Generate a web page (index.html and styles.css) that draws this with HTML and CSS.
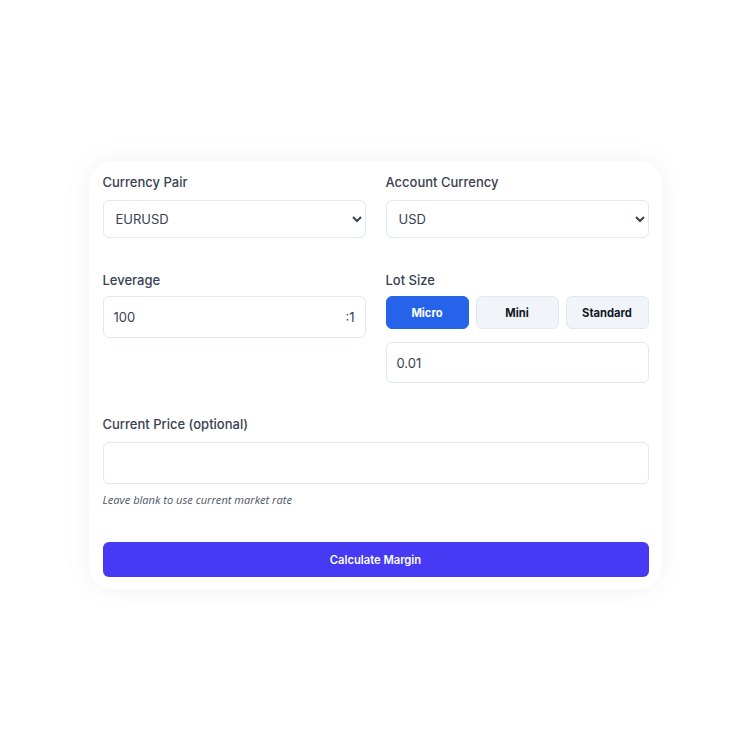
FILE: index.html
```html
<!DOCTYPE html>
<html lang="en">
<head>
<meta charset="utf-8">
<title>Margin Calculator</title>
<link rel="stylesheet" href="styles.css">
</head>
<body>
<div class="card">
  <div class="grid">
    <div class="group">
      <label class="label">Currency Pair</label>
      <select class="field select">
        <option>EURUSD</option>
      </select>
    </div>
    <div class="group">
      <label class="label">Account Currency</label>
      <select class="field select">
        <option>USD</option>
      </select>
    </div>
    <div class="group">
      <label class="label">Leverage</label>
      <div class="field input-wrap">
        <span class="value">100</span>
        <span class="suffix">:1</span>
      </div>
    </div>
    <div class="group">
      <label class="label">Lot Size</label>
      <div class="lots">
        <button class="lot active">Micro</button>
        <button class="lot">Mini</button>
        <button class="lot">Standard</button>
      </div>
      <div class="field input-wrap lot-input">
        <span class="value">0.01</span>
      </div>
    </div>
    <div class="group full">
      <label class="label">Current Price (optional)</label>
      <div class="field input-wrap"></div>
      <p class="help">Leave blank to use current market rate</p>
    </div>
  </div>
  <button class="calc">Calculate Margin</button>
</div>
</body>
</html>
```
FILE: styles.css
```css
html, body {
  margin: 0;
  padding: 0;
  background: #ffffff;
}
body {
  height: 100vh;
  display: flex;
  align-items: center;
  justify-content: center;
  font-family: Inter, "Liberation Sans", sans-serif;
  color: #374151;
}
.card {
  width: 573px;
  box-sizing: border-box;
  padding: 11px 13px 12px 14px;
  background: #ffffff;
  border-radius: 24px;
  box-shadow: 0 0 28px rgba(0, 0, 0, 0.06);
}
.grid {
  display: grid;
  grid-template-columns: 1fr 1fr;
  column-gap: 20px;
  row-gap: 32px;
}
.group {
  display: flex;
  flex-direction: column;
}
.full {
  grid-column: 1 / 3;
}
.label {
  font-size: 13px;
  line-height: 20px;
  font-weight: 500;
  color: #374151;
  margin-bottom: 6px;
}
.full .label {
  margin-top: -1px;
  margin-bottom: 8px;
}
.field {
  box-sizing: border-box;
  border: 1px solid #e2e8f0;
  border-radius: 6px;
  background: #ffffff;
  font-family: Inter, "Liberation Sans", sans-serif;
  font-size: 13px;
  color: #374151;
}
.select {
  height: 38px;
  padding: 0 8px 0 8px;
  margin: 2px 0 0;
  width: 100%;
}
.input-wrap {
  height: 42px;
  display: flex;
  align-items: center;
  justify-content: space-between;
  padding: 0 10px 0 10px;
}
.suffix {
  font-size: 13px;
  color: #374151;
}
.lots {
  display: grid;
  grid-template-columns: 1fr 1fr 1fr;
  column-gap: 7px;
  margin-bottom: 13px;
}
.lot {
  height: 33px;
  box-sizing: border-box;
  border: 1px solid #e2e8f0;
  border-radius: 6px;
  background: #f1f5f9;
  font-family: Inter, "Liberation Sans", sans-serif;
  font-size: 11.2px;
  font-weight: 700;
  color: #111827;
  padding: 0;
}
.lot.active {
  background: #2563eb;
  border-color: #2563eb;
  color: #ffffff;
}
.lot-input {
  height: 41px;
}
.help {
  margin: 9px 0 0;
  font-family: "Open Sans", Inter, sans-serif;
  font-size: 11.1px;
  line-height: 14px;
  font-style: italic;
  color: #4b5563;
}
.calc {
  display: block;
  width: 100%;
  height: 35px;
  margin-top: 35px;
  border: none;
  border-radius: 6px;
  background: #463af5;
  color: #ffffff;
  font-family: Inter, "Liberation Sans", sans-serif;
  font-size: 11.2px;
  font-weight: 600;
}
```
